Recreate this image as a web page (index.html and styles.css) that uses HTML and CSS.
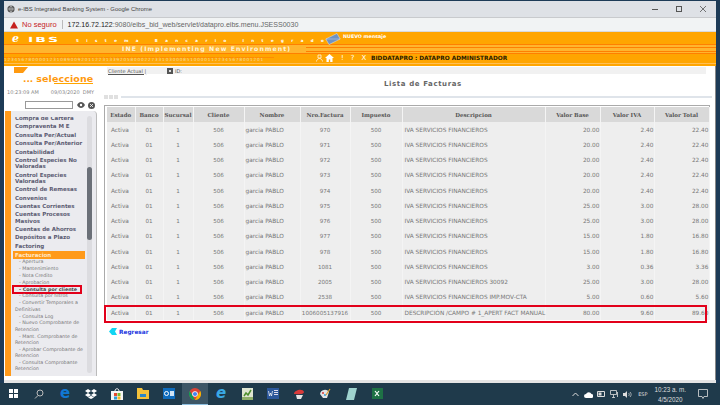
FILE: index.html
```html
<!doctype html>
<html lang="es">
  <head>
    <meta charset="utf-8">
    <title>e-IBS Integrated Banking System</title>
    <link rel="stylesheet" href="styles.css">
  </head>
  <body>
    <div class="window">
      <div class="titlebar">
        <svg class="globe" width="8" height="8" viewBox="0 0 10 10"><circle cx="5" cy="5" r="4.5" fill="#555"/><path d="M1 5h8M5 1c-2 2-2 6 0 8M5 1c2 2 2 6 0 8" stroke="#ddd" stroke-width=".7" fill="none"/></svg>
        <span class="title-text">e-IBS Integrated Banking System - Google Chrome</span>
        <div class="win-btns">
          <svg width="8" height="8" viewBox="0 0 8 8"><path d="M1 4.5h6" stroke="#555"/></svg>
          <svg width="8" height="8" viewBox="0 0 8 8"><rect x="1.5" y="1.5" width="5" height="5" fill="none" stroke="#555"/></svg>
          <svg width="8" height="8" viewBox="0 0 8 8"><path d="M1 1l6 6M7 1l-6 6" stroke="#555" stroke-width=".8"/></svg>
        </div>
      </div>
      <div class="addressbar">
        <svg width="8" height="8" viewBox="0 0 8 8"><path d="M4 .5L8 7.5H0z" fill="#c5221f"/></svg>
        <span class="not-secure">No seguro</span>
        <span class="addr-sep"></span>
        <span class="url">172.16.72.122<span class="url-rest">:9080/eibs_bid_web/servlet/datapro.eibs.menu.JSESS0030</span></span>
      </div>

      <header class="app-header">
        <div class="hdr-row hdr-top">
          <span class="logo-e">e</span><span class="logo-ibs">IBS</span>
          <span class="sys-name">Sistema Bancario Integrado</span>
          <svg class="mail" width="16" height="12" viewBox="0 0 20 14"><path d="M1 7L15 0l4 7-14 7z" fill="#6f93c4" stroke="#dfe7f2" stroke-width=".6"/><path d="M1 7l10 0 8 0" stroke="#dfe7f2" stroke-width=".5" fill="none"/></svg>
          <span class="new-msg">NUEVO mensaje</span>
        </div>
        <div class="hdr-row hdr-mid">
          <span class="env-name">INE (Implementing New Environment)</span>
        </div>
        <div class="hdr-row hdr-bot">
          <span class="digits">12345678000012310890092011223133920580002273310300085100001122345678001201</span>
          <span class="tools">
            <svg class="tool-person" width="7" height="8" viewBox="0 0 7 8"><path d="M2 1h3v3H2zM.5 7.500c0-2 2-3 3-3s3 1 3 3" fill="none" stroke="#fff" stroke-width=".7"/></svg>
            <svg width="9" height="8" viewBox="0 0 9 8"><path d="M4.500 0L9 4H7.500v4H5.200V5.500H3.800V8H1.500V4H0z" fill="#fff"/></svg>
            <span>!</span><span>?</span><span>X</span>
          </span>
          <span class="user">BIDDATAPRO : DATAPRO ADMINISTRADOR</span>
        </div>
      </header>

      <div class="app-body">
        <aside class="side">
          <div class="select-logo">
            <svg class="sel-flag" width="14" height="6" viewBox="0 0 14 6"><path d="M0 0h14L9 6H0z" fill="#ff9a10"/></svg>
            <span class="sel-dots">...</span><span class="sel-word">seleccione</span>
          </div>
          <div class="clock"><span>10:23:09 AM</span><span>09/03/2020 &nbsp;DMY</span></div>
          <div class="search">
            <input class="search-box" type="text">
            <svg width="8" height="6" viewBox="0 0 8 6"><path d="M0 3c2-4 6-4 8 0-2 4-6 4-8 0z" fill="#555"/><circle cx="4" cy="3" r="1.200" fill="#fff"/></svg>
            <svg width="7" height="7" viewBox="0 0 7 7"><circle cx="3.500" cy="3.500" r="3.500" fill="#555"/><path d="M2 2l3 3M5 2L2 5" stroke="#fff" stroke-width=".8"/></svg>
          </div>
          <div class="menu-panel">
            <div class="menu-band"></div>
            <nav class="menu">
              <a class="menu-item first">Compra de Cartera</a>
              <a class="menu-item">Compraventa M E</a>
              <a class="menu-item">Consulta Per/Actual</a>
              <a class="menu-item">Consulta Per/Anterior</a>
              <a class="menu-item">Contabilidad</a>
              <a class="menu-item">Control Especies No Valoradas</a>
              <a class="menu-item">Control Especies Valoradas</a>
              <a class="menu-item">Control de Remesas</a>
              <a class="menu-item">Convenios</a>
              <a class="menu-item">Cuentas Corrientes</a>
              <a class="menu-item">Cuentas Procesos Masivos</a>
              <a class="menu-item">Cuentas de Ahorros</a>
              <a class="menu-item">Depósitos a Plazo</a>
              <a class="menu-item">Factoring</a>
              <a class="menu-item active">Facturacion</a>
              <a class="sub-item">- Apertura</a>
              <a class="sub-item">- Mantenimiento</a>
              <a class="sub-item">- Nota Credito</a>
              <a class="sub-item">- Aprobacion</a>
              <a class="sub-item marked">- Consulta por cliente</a>
              <a class="sub-item">- Consulta por filtros</a>
              <a class="sub-item">- Convertir Temporales a Definitivas</a>
              <a class="sub-item">- Consulta Log</a>
              <a class="sub-item">- Nuevo Comprobante de Retencion</a>
              <a class="sub-item">- Mant. Comprobante de Retencion</a>
              <a class="sub-item">- Aprobar Comprobante de Retencion</a>
              <a class="sub-item">- Consulta Comprobante Retencion</a>
            </nav>
            <div class="scrolltrack"><div class="scrollthumb"></div></div>
          </div>
        </aside>

        <main class="content">
          <div class="client-strip">
            <a class="client-link">Cliente Actual |</a>
            <span class="id-box"></span>
            <span class="id-label">ID:</span>
          </div>
          <h1 class="page-title">Lista de Facturas</h1>
          <div class="rule-row">
            <span class="rule-dots"><i></i><i></i><i></i></span>
            <span class="rule"></span>
          </div>
          <div class="table-frame">
            <table class="invoices">
              <thead>
                <tr><th class="c-est">Estado</th><th class="c-ban">Banco</th><th class="c-suc">Sucursal</th><th class="c-cli">Cliente</th><th class="c-nom">Nombre</th><th class="c-nro">Nro.Factura</th><th class="c-imp">Impuesto</th><th class="c-des">Descripcion</th><th class="c-val">Valor Base</th><th class="c-iva">Valor IVA</th><th class="c-tot">Valor Total</th></tr>
              </thead>
              <tbody>
                <tr><td>Activa</td><td class="mid">01</td><td class="mid">1</td><td class="mid">506</td><td>garcia PABLO</td><td class="mid">970</td><td class="mid">500</td><td>IVA SERVICIOS FINANCIEROS</td><td class="num">20.00</td><td class="num">2.40</td><td class="num">22.40</td></tr>
                <tr><td>Activa</td><td class="mid">01</td><td class="mid">1</td><td class="mid">506</td><td>garcia PABLO</td><td class="mid">971</td><td class="mid">500</td><td>IVA SERVICIOS FINANCIEROS</td><td class="num">20.00</td><td class="num">2.40</td><td class="num">22.40</td></tr>
                <tr><td>Activa</td><td class="mid">01</td><td class="mid">1</td><td class="mid">506</td><td>garcia PABLO</td><td class="mid">972</td><td class="mid">500</td><td>IVA SERVICIOS FINANCIEROS</td><td class="num">20.00</td><td class="num">2.40</td><td class="num">22.40</td></tr>
                <tr><td>Activa</td><td class="mid">01</td><td class="mid">1</td><td class="mid">506</td><td>garcia PABLO</td><td class="mid">973</td><td class="mid">500</td><td>IVA SERVICIOS FINANCIEROS</td><td class="num">20.00</td><td class="num">2.40</td><td class="num">22.40</td></tr>
                <tr><td>Activa</td><td class="mid">01</td><td class="mid">1</td><td class="mid">506</td><td>garcia PABLO</td><td class="mid">974</td><td class="mid">500</td><td>IVA SERVICIOS FINANCIEROS</td><td class="num">20.00</td><td class="num">2.40</td><td class="num">22.40</td></tr>
                <tr><td>Activa</td><td class="mid">01</td><td class="mid">1</td><td class="mid">506</td><td>garcia PABLO</td><td class="mid">975</td><td class="mid">500</td><td>IVA SERVICIOS FINANCIEROS</td><td class="num">25.00</td><td class="num">3.00</td><td class="num">28.00</td></tr>
                <tr><td>Activa</td><td class="mid">01</td><td class="mid">1</td><td class="mid">506</td><td>garcia PABLO</td><td class="mid">976</td><td class="mid">500</td><td>IVA SERVICIOS FINANCIEROS</td><td class="num">25.00</td><td class="num">3.00</td><td class="num">28.00</td></tr>
                <tr><td>Activa</td><td class="mid">01</td><td class="mid">1</td><td class="mid">506</td><td>garcia PABLO</td><td class="mid">977</td><td class="mid">500</td><td>IVA SERVICIOS FINANCIEROS</td><td class="num">15.00</td><td class="num">1.80</td><td class="num">16.80</td></tr>
                <tr><td>Activa</td><td class="mid">01</td><td class="mid">1</td><td class="mid">506</td><td>garcia PABLO</td><td class="mid">978</td><td class="mid">500</td><td>IVA SERVICIOS FINANCIEROS</td><td class="num">15.00</td><td class="num">1.80</td><td class="num">16.80</td></tr>
                <tr><td>Activa</td><td class="mid">01</td><td class="mid">1</td><td class="mid">506</td><td>garcia PABLO</td><td class="mid">1081</td><td class="mid">500</td><td>IVA SERVICIOS FINANCIEROS</td><td class="num">3.00</td><td class="num">0.36</td><td class="num">3.36</td></tr>
                <tr><td>Activa</td><td class="mid">01</td><td class="mid">1</td><td class="mid">506</td><td>garcia PABLO</td><td class="mid">2005</td><td class="mid">500</td><td>IVA SERVICIOS FINANCIEROS 30092</td><td class="num">25.00</td><td class="num">3.00</td><td class="num">28.00</td></tr>
                <tr><td>Activa</td><td class="mid">01</td><td class="mid">1</td><td class="mid">506</td><td>garcia PABLO</td><td class="mid">2538</td><td class="mid">500</td><td>IVA SERVICIOS FINANCIEROS IMP.MOV-CTA</td><td class="num">5.00</td><td class="num">0.60</td><td class="num">5.60</td></tr>
                <tr><td>Activa</td><td class="mid">01</td><td class="mid">1</td><td class="mid">506</td><td>garcia PABLO</td><td class="mid">1006005137916</td><td class="mid">500</td><td>DESCRIPCIÓN /CAMPO # 1_APERT FACT MANUAL</td><td class="num">80.00</td><td class="num">9.60</td><td class="num">89.60</td></tr>
              </tbody>
            </table>
            <div class="mark-box"></div>
          </div>
          <a class="back-link">
            <svg width="8" height="7" viewBox="0 0 8 7"><path d="M3 0h5L6 3.500 8 7H3L0 3.500z" fill="#12d5f2"/></svg>
            Regresar
          </a>
        </main>
      </div>
      <div class="statusline"></div>
    </div>

    <footer class="taskbar">
      <div class="task-icons">
        <span class="task"><svg width="9" height="9" viewBox="0 0 9 9"><path d="M0 0h4v4H0zM5 0h4v4H5zM0 5h4v4H0zM5 5h4v4H5z" fill="#fff"/></svg></span>
        <span class="task"><svg width="10" height="10" viewBox="0 0 10 10"><circle cx="6" cy="4" r="3" fill="none" stroke="#bbb"/><path d="M4 6.500L1 9.500" stroke="#bbb"/></svg></span>
        <span class="task"><span class="edge-e">e</span></span>
        <span class="task"><svg width="12" height="10" viewBox="0 0 12 10"><path d="M3 0l3 2-3 2-3-2zM9 0l3 2-3 2-3-2zM3 4l3 2-3 2-3-2zM9 4l3 2-3 2-3-2zM3 8.500l3-1.800 3 1.800L6 10z" fill="#fff"/></svg></span>
        <span class="task"><svg width="12" height="12" viewBox="0 0 12 12"><path d="M0 3h12v9H0z" fill="#f4f4f4"/><path d="M4 3c0-3 4-3 4 0" fill="none" stroke="#f4f4f4"/><path d="M3 5h3v3H3z" fill="#e8492f"/><path d="M6.500 5h3v3h-3z" fill="#7cb82f"/><path d="M3 8.500h3v3H3z" fill="#2c9cd8"/><path d="M6.500 8.500h3v3h-3z" fill="#f6b91e"/></svg></span>
        <span class="task"><svg width="12" height="11" viewBox="0 0 12 11"><path d="M0 0h5l1 2h6v9H0z" fill="#f3c13a"/><path d="M3 6h6v3H3z" fill="#2a86c8"/></svg></span>
        <span class="task"><svg width="12" height="11" viewBox="0 0 12 11"><path d="M0 0h12v11H0z" fill="#0f6cbd"/><circle cx="3.500" cy="5.500" r="2" fill="none" stroke="#fff"/><path d="M7 3h4v5H7z" fill="#cfe4f6"/></svg></span>
        <span class="task current"><svg width="12" height="12" viewBox="0 0 12 12"><circle cx="6" cy="6" r="6" fill="#db4437"/><path d="M6 12A6 6 0 0 1 .8 3L3.500 7.500 6 12z" fill="#0f9d58"/><path d="M11.200 3A6 6 0 0 1 6 12l2.600-4.500z" fill="#f4b400"/><circle cx="6" cy="6" r="2.800" fill="#fff"/><circle cx="6" cy="6" r="2.100" fill="#4285f4"/></svg></span>
        <span class="task"><span class="ie-e">e</span></span>
        <span class="task"><svg width="11" height="12" viewBox="0 0 11 12"><path d="M0 0h11v12H0z" fill="#dfe6d2"/><path d="M2 8l2-3 2 2 3-5" stroke="#4d8f2f" stroke-width="1.500" fill="none"/><path d="M0 9h11v3H0z" fill="#8fb06a"/></svg></span>
        <span class="task"><svg width="12" height="11" viewBox="0 0 12 11"><path d="M0 0h12v11H0z" fill="#2b579a"/><path d="M7 2h4v1H7zM7 4h4v1H7zM7 6h4v1H7z" fill="#dde"/><path d="M1.500 3l1 5 1-3 1 3 1-5" stroke="#fff" stroke-width=".7" fill="none"/></svg></span>
        <span class="task"><svg width="12" height="10" viewBox="0 0 12 10"><path d="M1 5c0-4 9-6 10-2 0 3-8 2-10 2z" fill="#d93a3a"/><path d="M3 6h7l-2 4H4z" fill="#e6e6e6"/></svg></span>
        <span class="task"><svg width="12" height="11" viewBox="0 0 12 11"><path d="M1 6a5 5 0 0 1 9-2l-2 6H4z" fill="#e4e4e4"/><circle cx="4" cy="5" r="1" fill="#d93a3a"/><circle cx="6" cy="7" r="1" fill="#2c9cd8"/><path d="M7 7l4-6" stroke="#e0a030" stroke-width="1.200"/></svg></span>
        <span class="task"><svg width="11" height="12" viewBox="0 0 11 12"><path d="M3 0h8l-3 12H0z" fill="#9fd3cf"/></svg></span>
        <span class="task"><svg width="11" height="11" viewBox="0 0 11 11"><path d="M0 0h11v11H0z" fill="#1e7145"/><path d="M3 3l4 5M7 3L3 8" stroke="#fff" stroke-width="1.200"/></svg></span>
      </div>
      <div class="tray">
        <svg width="9" height="5" viewBox="0 0 8 5"><path d="M1 4l3-3 3 3" stroke="#ddd" fill="none"/></svg>
        <svg width="9" height="7" viewBox="0 0 9 7"><path d="M2 7a2 2 0 0 1 0-4 3 3 0 0 1 5.500 0 2 2 0 0 1-.5 4z" fill="#fff"/></svg>
        <svg width="9" height="6" viewBox="0 0 9 6"><path d="M.5.500h7v5h-7z" fill="none" stroke="#ddd"/><path d="M1.500 1.500h3v3h-3z" fill="#ddd"/></svg>
        <svg width="9" height="8" viewBox="0 0 9 8"><path d="M.5.500h6v4h-6zM2 7.500h3M3.500 4.500v3M7.500 2v5" stroke="#ddd" stroke-width=".8" fill="none"/></svg>
        <svg width="9" height="7" viewBox="0 0 9 7"><path d="M0 2h2l2-2v7L2 5H0z" fill="#ddd"/><path d="M5.500 2c1 1 1 2 0 3M7 1c1.500 1.500 1.500 3.500 0 5" stroke="#ddd" stroke-width=".7" fill="none"/></svg>
        <span class="lang">ESP</span>
        <span class="tray-clock"><span>10:23 a. m.</span><span>4/5/2020</span></span>
        <svg class="notify" width="10" height="10" viewBox="0 0 10 10"><path d="M.5.500h9v7H6L5 9.500 4 7.500H.5z" fill="none" stroke="#ddd" stroke-width=".8"/></svg>
      </div>
    </footer>
  </body>
</html>
```

FILE: styles.css
```css
* {
  box-sizing: border-box;
}
html, body {
  margin: 0;
  height: 405px;
  overflow: hidden;
}
body {
  display: flex;
  flex-direction: column;
  background: #1d3b57;
  font-family: "DejaVu Sans", Verdana, sans-serif;
  font-size: 6px;
  color: #777;
}
.window {
  flex: 1;
  margin: 1px 4px 0 4px;
  display: flex;
  flex-direction: column;
  background: #fff;
  min-height: 0;
}

/* chrome */
.titlebar {
  height: 16px;
  background: #dee1e6;
  display: flex;
  align-items: center;
  padding-left: 3px;
  gap: 3px;
  font-family: "Liberation Sans", Arial, sans-serif;
  font-size: 5.900px;
  color: #444;
}
.win-btns {
  margin-left: auto;
  display: flex;
  gap: 16px;
  padding-right: 9px;
}
.addressbar {
  height: 14px;
  background: #f1f3f4;
  border-top: 1px solid #c8cacd;
  display: flex;
  align-items: center;
  padding-left: 6px;
  font-family: "Liberation Sans", Arial, sans-serif;
  font-size: 7.500px;
}
.not-secure {
  color: #c5221f;
  margin-left: 4px;
}
.addr-sep {
  width: 1px;
  height: 9px;
  background: #bbb;
  margin: 0 5px;
}
.url {
  color: #222;
  font-size: 7.050px;
}
.url-rest {
  color: #666;
}

/* orange header */
.app-header {
  height: 35px;
  background-color: #ffa500;
  background-image:
    linear-gradient(#ff7f00, #ff7f00),
    linear-gradient(#ff7f00, #ff7f00),
    linear-gradient(#ff7f00, #ff7f00),
    linear-gradient(#ff7f00, #ff7f00),
    linear-gradient(#ff8c00, #ff8c00),
    linear-gradient(#ffbf55, #ffbf55),
    linear-gradient(#ffb52e, #ffb52e);
  background-size: 100% 1px, 100% 1px, 410px 1px, 410px 1px, 270px 1px, 100% 1px, 100% 9px;
  background-position: 0 12px, 0 21px, 100% 15px, 100% 19px, 0 25px, 0 31px, 0 12px;
  background-repeat: no-repeat;
  border-top: 1px solid #d9d9d9;
  display: flex;
  flex-direction: column;
  color: #fff;
}
.hdr-row {
  display: flex;
  align-items: center;
}
.hdr-top {
  height: 12px;
  padding-left: 8px;
}
.logo-e {
  font: italic bold 11px "DejaVu Serif", serif;
  width: 16px;
}
.logo-ibs {
  font: bold 7px "DejaVu Sans", sans-serif;
  letter-spacing: 1px;
  width: 48px;
  margin-top: 3px;
  transform: scaleX(2);
  transform-origin: left center;
}
.sys-name {
  font: bold 4px "DejaVu Sans", sans-serif;
  letter-spacing: 7.400px;
  width: 249px;
  margin-top: 4px;
  white-space: nowrap;
}
.mail {
  flex-shrink: 0;
  margin-top: 1px;
  margin-right: 2px;
}
.new-msg {
  font: bold 4.800px "DejaVu Sans", sans-serif;
  margin-top: -3px;
  white-space: nowrap;
}
.hdr-mid {
  height: 9px;
  padding-left: 118px;
}
.env-name {
  font: bold 6.200px "DejaVu Sans", sans-serif;
  letter-spacing: 1.100px;
  color: #fff3dc;
  white-space: nowrap;
}
.hdr-bot {
  height: 13px;
}
.digits {
  font-size: 4.300px;
  color: #f3d9a0;
  letter-spacing: .780px;
  width: 312px;
  overflow: hidden;
  white-space: nowrap;
}
.tools {
  width: 55px;
  display: flex;
  align-items: center;
  gap: 7px;
  font-size: 7px;
  margin-bottom: 3px;
}
.tool-person {
  margin-right: -5px;
}
.user {
  font: bold 5.800px "DejaVu Sans", sans-serif;
  color: #2b1c00;
  white-space: nowrap;
  margin-bottom: 3px;
}

/* layout */
.app-body {
  flex: 1;
  min-height: 0;
  display: flex;
}
.statusline {
  height: 3px;
  background: #e4e4e4;
}

/* left column */
.side {
  width: 96px;
  display: flex;
  flex-direction: column;
  flex-shrink: 0;
}
.select-logo {
  height: 20px;
  padding: 5px 0 0 19px;
  display: flex;
  align-items: center;
  white-space: nowrap;
  position: relative;
}
.sel-flag {
  position: absolute;
  top: 1px;
  left: 10px;
}
.sel-dots {
  color: #ff9a10;
  font-weight: bold;
  font-size: 9px;
  margin-right: 3px;
}
.sel-word {
  color: #ff9a10;
  font: bold 9.500px "DejaVu Sans", sans-serif;
  letter-spacing: .1px;
  line-height: 11px;
  background: linear-gradient(#ffa500, #ffa500) right bottom / 39px 1px no-repeat;
}
.clock {
  margin-top: 2px;
  height: 8px;
  display: flex;
  gap: 12px;
  padding-left: 3px;
  font-size: 5px;
  color: #888;
  line-height: 8px;
}
.search {
  margin-top: 4px;
  height: 10px;
  display: flex;
  align-items: center;
  padding-left: 21px;
  gap: 3px;
}
.search-box {
  width: 48px;
  height: 8px;
  padding: 0;
  border: 1px solid #999;
  background: #fff;
  margin-right: 1px;
}
.menu-panel {
  flex: 1;
  min-height: 0;
  margin: 1px 0 4px 1px;
  width: 92px;
  display: flex;
  background: #ebebef;
  overflow: hidden;
  border-right: 1px solid #bbb;
  border-radius: 0 4px 0 0;
}
.menu-band {
  width: 6px;
  flex-shrink: 0;
  background: #ff9a1a;
}
.menu {
  width: 74px;
  margin-top: 6px;
  padding-left: 4px;
  display: flex;
  flex-direction: column;
  flex-shrink: 0;
  overflow: hidden;
}
.menu-item {
  font-weight: bold;
  font-size: 5.500px;
  line-height: 6.200px;
  color: #5c5c72;
  padding: 1.100px 0;
}
.menu-item.first {
  margin-top: -3px;
}
.menu-item.active {
  background: #ff9a1a;
  color: #ffe8c8;
  margin: .6px 0 0 -2px;
  padding: 0 0 0 2px;
  height: 8px;
  line-height: 8px;
}
.sub-item {
  font-size: 4.800px;
  line-height: 6.300px;
  color: #777;
  padding: .3px 0;
  text-indent: 4px;
}
.sub-item.marked {
  font-weight: bold;
  color: #444;
  outline: 2px solid #e2001a;
  outline-offset: -1px;
  margin-left: -2px;
  padding-left: 2px;
  width: 68px;
  white-space: nowrap;
}
.scrolltrack {
  width: 5px;
  margin: 5px 0 3px 2px;
  background: #dcdce0;
  border-radius: 3px;
  position: relative;
  flex-shrink: 0;
}
.scrollthumb {
  position: absolute;
  top: 51px;
  left: 0;
  width: 5px;
  height: 73px;
  background: #6b7078;
  border-radius: 3px;
}

/* main content */
.content {
  flex: 1;
  min-width: 0;
  display: flex;
  flex-direction: column;
  padding-left: 4px;
  border-right: 1px solid #888;
}
.client-strip {
  height: 7px;
  margin: 1px 9px 0 3px;
  background: #f1f1f1;
  display: flex;
  align-items: center;
  font-size: 5px;
  color: #555;
}
.client-link {
  text-decoration: underline;
  padding-left: 1px;
  width: 60px;
}
.id-box {
  width: 6px;
  height: 6px;
  border: 2px solid #555;
  background: #ddd;
}
.id-label {
  margin-left: 2px;
}
.page-title {
  margin: 5px 0 0 0;
  height: 11px;
  padding-left: 280px;
  font-size: 7px;
  line-height: 11px;
  color: #666;
  font-weight: bold;
  letter-spacing: .6px;
}
.rule-row {
  height: 7px;
  display: flex;
  align-items: center;
  gap: 3px;
  margin-top: 3px;
  padding-right: 3px;
}
.rule-dots {
  display: flex;
  gap: 1px;
}
.rule-dots i {
  width: 4px;
  height: 4px;
  background: #e0e0e0;
}
.rule {
  flex: 1;
  height: 2px;
  background: #dfe4ea;
}
.table-frame {
  width: 606px;
  margin-top: 5px;
  border: 1px solid #aaa;
  border-bottom: 0;
  padding: 1px 1px 0 2px;
  position: relative;
}
.mark-box {
  position: absolute;
  left: -1px;
  top: 199px;
  width: 603px;
  height: 18px;
  border: 2px solid #e2001a;
}
.invoices {
  width: 602px;
  table-layout: fixed;
  border-collapse: collapse;
  font-size: 5.800px;
}
.invoices th {
  height: 15px;
  padding: 0;
  background: #d9d9d9;
  border-right: 1px solid #f4f4f4;
  font: bold 5.500px "DejaVu Serif", serif;
  color: #555;
  text-align: center;
}
.invoices td {
  height: 15.250px;
  padding: 0 0 0 4px;
  background: #eee;
  border-right: 1px solid #f4f4f4;
  color: #777;
  white-space: nowrap;
}
.invoices td:nth-child(5) {
  padding-left: 1px;
}
.invoices td:nth-child(8) {
  padding-left: 2px;
}
.invoices .mid {
  text-align: center;
  padding: 0;
  font-size: 5.600px;
}
.invoices .num {
  text-align: right;
  padding: 0;
}
.c-est { width: 28px; }
.c-ban { width: 28px; }
.c-suc { width: 30px; }
.c-cli { width: 51px; }
.c-nom { width: 56px; }
.c-nro { width: 50px; }
.c-imp { width: 52px; }
.c-des { width: 143px; }
.c-val { width: 55px; }
.c-iva { width: 54px; }
.c-tot { width: 55px; }
.back-link {
  margin: 8px 0 0 5px;
  display: flex;
  align-items: center;
  gap: 2px;
  color: #1a35e0;
  font-size: 5.800px;
  font-weight: bold;
}

/* taskbar */
.taskbar {
  height: 22px;
  background: #1f3a4b;
  display: flex;
  align-items: stretch;
  justify-content: space-between;
  flex-shrink: 0;
}
.task-icons {
  display: flex;
}
.task {
  width: 26px;
  display: flex;
  align-items: center;
  justify-content: center;
  border-bottom: 1px solid transparent;
}
.task.current {
  background: #3d5666;
  border-bottom-color: #8fc0e0;
}
.edge-e {
  color: #1178d4;
  font: bold 15px "DejaVu Sans", sans-serif;
  line-height: 15px;
}
.ie-e {
  color: #3aa9e6;
  font: italic bold 15px "DejaVu Sans", sans-serif;
  line-height: 15px;
}
.tray {
  display: flex;
  align-items: center;
  gap: 4px;
  padding-right: 12px;
  color: #ddd;
}
.lang {
  font-size: 5px;
  margin-left: 2px;
}
.tray-clock {
  display: flex;
  flex-direction: column;
  align-items: center;
  gap: 3px;
  font-family: "Liberation Sans", Arial, sans-serif;
  font-size: 6.300px;
  margin: 0 8px 0 3px;
}
```
